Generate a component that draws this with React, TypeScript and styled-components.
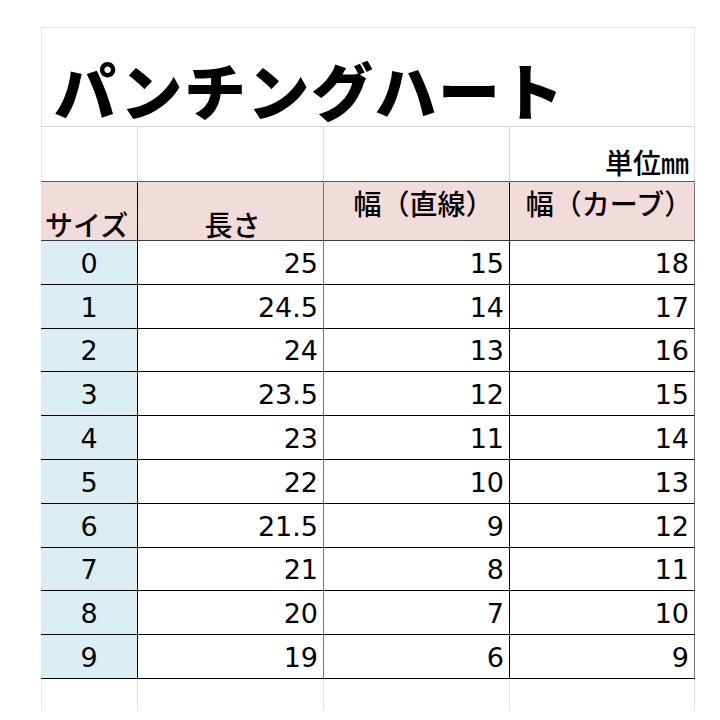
import React from "react";
import styled, { createGlobalStyle } from "styled-components";

const Global = createGlobalStyle`
  html, body { margin: 0; padding: 0; background: #ffffff; }
  body { font-family: "Noto Sans CJK JP", "Noto Sans", sans-serif; color: #000; }
`;

const Sheet = styled.div`
  padding: 27px 0 0 41px;
  width: 720px;
  height: 720px;
  box-sizing: border-box;
  overflow: hidden;
`;

const TitleRow = styled.div`
  width: 654px;
  height: 100px;
  box-sizing: border-box;
  border: 1px solid #e6e6e6;
  border-bottom-color: #d6d6d6;
  display: flex;
  align-items: flex-end;
  padding: 0 0 0 12px;
`;

const Title = styled.h1`
  margin: 0;
  font-family: "Noto Sans CJK JP", sans-serif;
  font-weight: 900;
  font-size: 62px;
  line-height: 1.2;
  letter-spacing: 1.5px;
`;

const Grid = styled.div`
  display: grid;
  width: 654px;
  grid-template-columns: 97px 186px 186px 185px;
  grid-template-rows: 55px 59px repeat(10, 43.8px) 32px;
`;

const UnitCell = styled.div<{ $first?: boolean }>`
  box-sizing: border-box;
  border-right: 1px solid #dcdcdc;
  border-left: ${(p) => (p.$first ? "1px solid #e6e6e6" : "none")};
  border-bottom: 1px solid #5a5a5a;
  display: flex;
  align-items: flex-end;
  justify-content: flex-end;
  padding: 0 5px 1px 0;
  font-size: 28px;
  font-weight: 500;
  line-height: 1.2;
`;

const HeadCell = styled.div<{ $align: "left" | "center"; $valign: "top" | "bottom"; $line: string }>`
  box-sizing: border-box;
  background: #f2dcdb;
  border-right: 1px solid ${(p) => p.$line};
  border-bottom: 1px solid #3a3a3a;
  display: flex;
  justify-content: ${(p) => (p.$align === "left" ? "flex-start" : "center")};
  align-items: ${(p) => (p.$valign === "top" ? "flex-start" : "flex-end")};
  padding: ${(p) => (p.$valign === "top" ? "5px 0 0 14px" : "0 0 0 4px")};
  font-size: 28px;
  font-weight: 500;
  line-height: 1.15;
  white-space: nowrap;
`;

const SizeCell = styled.div`
  box-sizing: border-box;
  background: #daeef3;
  border-right: 1px solid #000;
  border-bottom: 1px solid #000;
  display: flex;
  align-items: center;
  justify-content: center;
  font-family: "DejaVu Sans", Verdana, sans-serif;
  font-size: 27px;
  padding-top: 2px;
`;

const ValueCell = styled.div<{ $line: string }>`
  box-sizing: border-box;
  background: #fff;
  border-right: 1px solid ${(p) => p.$line};
  border-bottom: 1px solid #000;
  display: flex;
  align-items: center;
  justify-content: flex-end;
  padding: 2px 5px 0 0;
  font-family: "DejaVu Sans", Verdana, sans-serif;
  font-size: 27px;
`;

const BlankCell = styled.div<{ $first?: boolean }>`
  box-sizing: border-box;
  border-right: 1px solid #e0e0e0;
  border-left: ${(p) => (p.$first ? "1px solid #e6e6e6" : "none")};
`;

const rows: [string, string, string, string][] = [
  ["0", "25", "15", "18"],
  ["1", "24.5", "14", "17"],
  ["2", "24", "13", "16"],
  ["3", "23.5", "12", "15"],
  ["4", "23", "11", "14"],
  ["5", "22", "10", "13"],
  ["6", "21.5", "9", "12"],
  ["7", "21", "8", "11"],
  ["8", "20", "7", "10"],
  ["9", "19", "6", "9"],
];

export default function App() {
  return (
    <>
      <Global />
      <Sheet>
        <TitleRow>
          <Title>パンチングハート</Title>
        </TitleRow>
        <Grid>
          <UnitCell $first />
          <UnitCell />
          <UnitCell />
          <UnitCell>単位㎜</UnitCell>

          <HeadCell $align="left" $valign="bottom" $line="#000">サイズ</HeadCell>
          <HeadCell $align="center" $valign="bottom" $line="#777">長さ</HeadCell>
          <HeadCell $align="center" $valign="top" $line="#000">幅（直線）</HeadCell>
          <HeadCell $align="center" $valign="top" $line="#777">幅（カーブ）</HeadCell>

          {rows.map((r) => (
            <React.Fragment key={r[0]}>
              <SizeCell>{r[0]}</SizeCell>
              <ValueCell $line="#777">{r[1]}</ValueCell>
              <ValueCell $line="#000">{r[2]}</ValueCell>
              <ValueCell $line="#777">{r[3]}</ValueCell>
            </React.Fragment>
          ))}

          <BlankCell $first />
          <BlankCell />
          <BlankCell />
          <BlankCell />
        </Grid>
      </Sheet>
    </>
  );
}
